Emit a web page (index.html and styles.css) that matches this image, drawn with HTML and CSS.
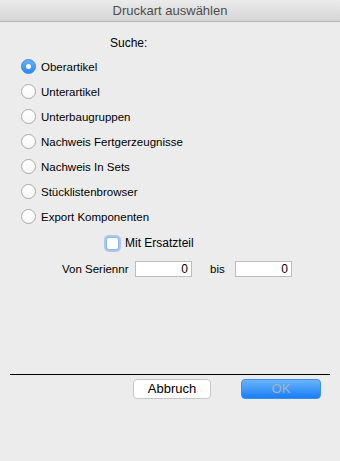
FILE: index.html
```html
<!DOCTYPE html>
<html>
<head>
<meta charset="utf-8">
<link rel="stylesheet" href="styles.css">
</head>
<body>
<div class="window">
  <div class="titlebar">Druckart auswählen</div>
  <div class="content">
    <div class="search-label">Suche:</div>
    <ul class="radios">
      <li class="radio-row"><span class="radio checked"></span><span>Oberartikel</span></li>
      <li class="radio-row"><span class="radio"></span><span>Unterartikel</span></li>
      <li class="radio-row"><span class="radio"></span><span>Unterbaugruppen</span></li>
      <li class="radio-row"><span class="radio"></span><span>Nachweis Fertgerzeugnisse</span></li>
      <li class="radio-row"><span class="radio"></span><span>Nachweis In Sets</span></li>
      <li class="radio-row"><span class="radio"></span><span>Stücklistenbrowser</span></li>
      <li class="radio-row"><span class="radio"></span><span>Export Komponenten</span></li>
    </ul>
    <div class="check-row"><span class="checkbox"></span><span>Mit Ersatzteil</span></div>
    <div class="serial-row">
      <span class="serial-label">Von Seriennr</span>
      <span class="field">0</span>
      <span class="bis">bis</span>
      <span class="field">0</span>
    </div>
    <div class="separator"></div>
    <div class="buttons">
      <button class="btn cancel">Abbruch</button>
      <button class="btn ok">OK</button>
    </div>
  </div>
</div>
</body>
</html>
```
FILE: styles.css
```css
html, body {
  margin: 0;
  padding: 0;
}
body {
  width: 340px;
  height: 461px;
  background: #ececec;
  font-family: "Liberation Sans", Arial, sans-serif;
  font-size: 11.5px;
  color: #000;
  overflow: hidden;
}
.titlebar {
  height: 21px;
  line-height: 21px;
  border-bottom: 1px solid #b4b4b4;
  background: linear-gradient(#ebebeb, #d5d5d5);
  text-align: center;
  font-size: 13px;
  color: #4d4d4d;
}
.content {
  display: flex;
  flex-direction: column;
}
.search-label {
  margin: 14px 0 0 110px;
  line-height: 14px;
  height: 14px;
  font-size: 12px;
}
.radios {
  list-style: none;
  margin: 4px 0 0 0;
  padding: 0 0 0 21px;
}
.radio-row {
  height: 25px;
  display: flex;
  align-items: center;
  gap: 5px;
}
.radio {
  width: 15px;
  height: 15px;
  box-sizing: border-box;
  border-radius: 50%;
  background: linear-gradient(#ffffff, #f7f7f7);
  border: 1px solid #a9a9a9;
  display: flex;
  align-items: center;
  justify-content: center;
}
.radio.checked {
  background: linear-gradient(#6db3fb, #2a86f6);
  border-color: #3a86e6;
}
.radio.checked::after {
  content: "";
  width: 5px;
  height: 5px;
  border-radius: 50%;
  background: #fff;
}
.check-row {
  margin: 6px 0 0 106px;
  height: 16px;
  display: flex;
  align-items: center;
  gap: 6px;
  font-size: 12px;
}
.checkbox {
  width: 13px;
  height: 13px;
  box-sizing: border-box;
  background: #fff;
  border: 1px solid #8eb5ea;
  border-radius: 3px;
  box-shadow: 0 0 0 2px rgba(120, 170, 240, 0.55);
}
.serial-row {
  margin: 10px 0 0 62px;
  height: 16px;
  display: flex;
  align-items: center;
}
.serial-label {
  width: 73px;
}
.field {
  width: 57px;
  height: 16px;
  box-sizing: border-box;
  background: #fff;
  border: 1px solid #bcbcbc;
  text-align: right;
  padding-right: 3px;
  line-height: 14px;
  font-size: 12px;
}
.bis {
  margin-left: 18px;
  width: 25px;
}
.separator {
  margin: 97px 10px 0 10px;
  height: 1px;
  background: #000;
}
.buttons {
  margin-top: 4px;
  padding-left: 133px;
  display: flex;
  gap: 30px;
}
.btn {
  height: 20px;
  box-sizing: border-box;
  border-radius: 4px;
  font-family: "Liberation Sans", Arial, sans-serif;
  font-size: 13px;
  padding: 0;
  line-height: 18px;
}
.cancel {
  width: 78px;
  background: #fff;
  border: 1px solid #c6c6c6;
  color: #000;
}
.ok {
  width: 80px;
  background: linear-gradient(#6ab4fb, #1a7ef7);
  border: 1px solid #3a8ef0;
  color: #a3b3c4;
}
```
